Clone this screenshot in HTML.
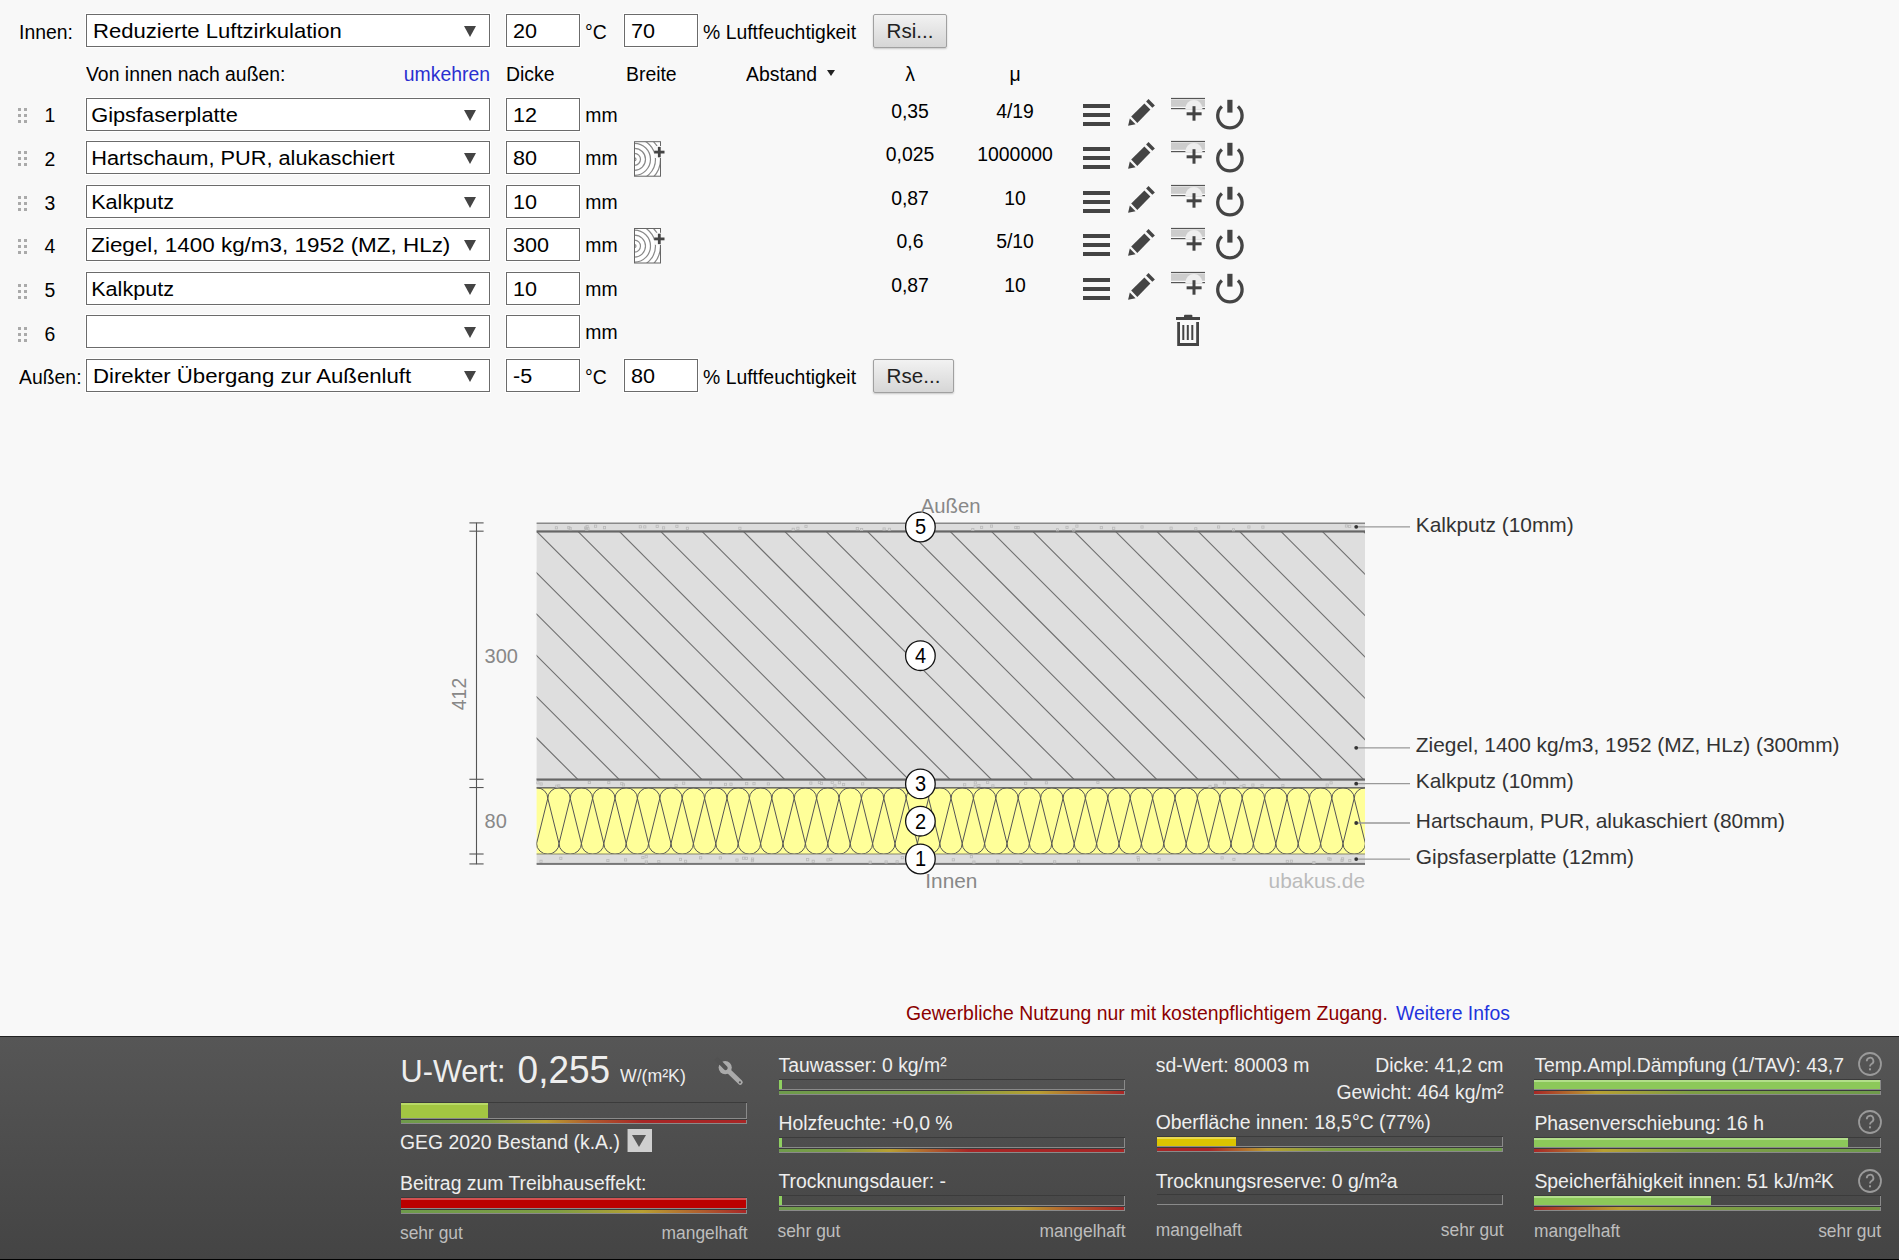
<!DOCTYPE html>
<html><head><meta charset="utf-8"><title>ubakus</title>
<style>
html,body{margin:0;padding:0;}
body{width:1899px;height:1260px;overflow:hidden;position:relative;background:#f8f8f8;font-family:"Liberation Sans", sans-serif;color:#000;}
.a{position:absolute;white-space:nowrap;}
.t{position:absolute;white-space:nowrap;font-size:19.4px;line-height:20px;}
.sel{position:absolute;box-sizing:border-box;background:#fff;border:1px solid #6b6b6b;box-shadow:0 0 0 1px #fff;}
.sel .tx{position:absolute;left:6px;top:5px;font-size:21.6px;line-height:22px;white-space:nowrap;transform:scaleY(0.92);transform-origin:0 100%;}
.sel .ar{position:absolute;right:13px;top:11px;width:0;height:0;border-left:6px solid transparent;border-right:6px solid transparent;border-top:11px solid #444;}
.inp{position:absolute;box-sizing:border-box;background:#fff;border:1px solid #6b6b6b;box-shadow:0 0 0 1px #fff;}
.inp .tx{position:absolute;left:6px;top:5px;font-size:21.6px;line-height:22px;white-space:nowrap;transform:scaleY(0.92);transform-origin:0 100%;}
.btn{position:absolute;box-sizing:border-box;border:1px solid #a0a0a0;border-radius:2px;background:linear-gradient(#f2f2f2,#d6d6d6);box-shadow:0 1px 2px rgba(0,0,0,0.2);font-size:20.6px;text-align:center;color:#222;}
</style></head><body>

<div class="a" style="left:19px;top:22.78px;font-size:19.4px;line-height:19.4px;color:#000;transform:scaleY(1.07);transform-origin:0 16.42px;">Innen:</div>
<div class="sel" style="left:86px;top:14px;width:404px;height:33px;"><div class="tx" style="left:6px;font-size:22.05px;">Reduzierte Luftzirkulation</div><div class="ar"></div></div>
<div class="inp" style="left:506px;top:14px;width:74px;height:33px;"><div class="tx">20</div></div>
<div class="a" style="left:585px;top:22.78px;font-size:19.4px;line-height:19.4px;color:#000;transform:scaleY(1.07);transform-origin:0 16.42px;">°C</div>
<div class="inp" style="left:624px;top:14px;width:74px;height:33px;"><div class="tx">70</div></div>
<div class="a" style="left:703px;top:22.78px;font-size:19.4px;line-height:19.4px;color:#000;transform:scaleY(1.07);transform-origin:0 16.42px;">% Luftfeuchtigkeit</div>
<div class="btn" style="left:873px;top:14px;width:74px;height:34px;line-height:32px;">Rsi...</div>
<div class="a" style="left:86px;top:64.58px;font-size:19.4px;line-height:19.4px;color:#000;transform:scaleY(1.07);transform-origin:0 16.42px;">Von innen nach außen:</div>
<div class="a" style="right:1409px;text-align:right;top:64.58px;font-size:19.4px;line-height:19.4px;color:#2a2fd0;transform:scaleY(1.07);transform-origin:0 16.42px;">umkehren</div>
<div class="a" style="left:506px;top:64.58px;font-size:19.4px;line-height:19.4px;color:#000;transform:scaleY(1.07);transform-origin:0 16.42px;">Dicke</div>
<div class="a" style="left:626px;top:64.58px;font-size:19.4px;line-height:19.4px;color:#000;transform:scaleY(1.07);transform-origin:0 16.42px;">Breite</div>
<div class="a" style="left:746px;top:64.58px;font-size:19.4px;line-height:19.4px;color:#000;transform:scaleY(1.07);transform-origin:0 16.42px;">Abstand</div>
<div class="a" style="left:827px;top:70px;width:0;height:0;border-left:4px solid transparent;border-right:4px solid transparent;border-top:6px solid #222;"></div>
<div class="a" style="left:810px;width:200px;text-align:center;top:64.58px;font-size:19.4px;line-height:19.4px;color:#000;transform:scaleY(1.07);transform-origin:0 16.42px;">λ</div>
<div class="a" style="left:915px;width:200px;text-align:center;top:64.58px;font-size:19.4px;line-height:19.4px;color:#000;transform:scaleY(1.07);transform-origin:0 16.42px;">μ</div>
<div class="a" style="left:18px;top:108.00px;width:3px;height:3px;background:#aaa;"></div>
<div class="a" style="left:18px;top:114.00px;width:3px;height:3px;background:#aaa;"></div>
<div class="a" style="left:18px;top:120.00px;width:3px;height:3px;background:#aaa;"></div>
<div class="a" style="left:24px;top:108.00px;width:3px;height:3px;background:#aaa;"></div>
<div class="a" style="left:24px;top:114.00px;width:3px;height:3px;background:#aaa;"></div>
<div class="a" style="left:24px;top:120.00px;width:3px;height:3px;background:#aaa;"></div>
<div class="a" style="left:-50px;width:200px;text-align:center;top:106.38px;font-size:19.4px;line-height:19.4px;color:#000;transform:scaleY(1.07);transform-origin:0 16.42px;">1</div>
<div class="sel" style="left:86px;top:98px;width:404px;height:33px;"><div class="tx" style="left:4.2px;font-size:21.8px;">Gipsfaserplatte</div><div class="ar"></div></div>
<div class="inp" style="left:506px;top:98px;width:74px;height:33px;"><div class="tx">12</div></div>
<div class="a" style="left:585.3px;top:106.08px;font-size:19.4px;line-height:19.4px;color:#000;transform:scaleY(1.07);transform-origin:0 16.42px;">mm</div>
<div class="a" style="left:810px;width:200px;text-align:center;top:101.78px;font-size:19.4px;line-height:19.4px;color:#000;transform:scaleY(1.07);transform-origin:0 16.42px;">0,35</div>
<div class="a" style="left:915px;width:200px;text-align:center;top:101.78px;font-size:19.4px;line-height:19.4px;color:#000;transform:scaleY(1.07);transform-origin:0 16.42px;">4/19</div>
<div class="a" style="left:18px;top:151.45px;width:3px;height:3px;background:#aaa;"></div>
<div class="a" style="left:18px;top:157.45px;width:3px;height:3px;background:#aaa;"></div>
<div class="a" style="left:18px;top:163.45px;width:3px;height:3px;background:#aaa;"></div>
<div class="a" style="left:24px;top:151.45px;width:3px;height:3px;background:#aaa;"></div>
<div class="a" style="left:24px;top:157.45px;width:3px;height:3px;background:#aaa;"></div>
<div class="a" style="left:24px;top:163.45px;width:3px;height:3px;background:#aaa;"></div>
<div class="a" style="left:-50px;width:200px;text-align:center;top:149.63px;font-size:19.4px;line-height:19.4px;color:#000;transform:scaleY(1.07);transform-origin:0 16.42px;">2</div>
<div class="sel" style="left:86px;top:141px;width:404px;height:33px;"><div class="tx" style="left:4.2px;font-size:21.75px;">Hartschaum, PUR, alukaschiert</div><div class="ar"></div></div>
<div class="inp" style="left:506px;top:141px;width:74px;height:33px;"><div class="tx">80</div></div>
<div class="a" style="left:585.3px;top:149.08px;font-size:19.4px;line-height:19.4px;color:#000;transform:scaleY(1.07);transform-origin:0 16.42px;">mm</div>
<div class="a" style="left:810px;width:200px;text-align:center;top:144.78px;font-size:19.4px;line-height:19.4px;color:#000;transform:scaleY(1.07);transform-origin:0 16.42px;">0,025</div>
<div class="a" style="left:915px;width:200px;text-align:center;top:144.78px;font-size:19.4px;line-height:19.4px;color:#000;transform:scaleY(1.07);transform-origin:0 16.42px;">1000000</div>
<div class="a" style="left:18px;top:195.90px;width:3px;height:3px;background:#aaa;"></div>
<div class="a" style="left:18px;top:201.90px;width:3px;height:3px;background:#aaa;"></div>
<div class="a" style="left:18px;top:207.90px;width:3px;height:3px;background:#aaa;"></div>
<div class="a" style="left:24px;top:195.90px;width:3px;height:3px;background:#aaa;"></div>
<div class="a" style="left:24px;top:201.90px;width:3px;height:3px;background:#aaa;"></div>
<div class="a" style="left:24px;top:207.90px;width:3px;height:3px;background:#aaa;"></div>
<div class="a" style="left:-50px;width:200px;text-align:center;top:193.88px;font-size:19.4px;line-height:19.4px;color:#000;transform:scaleY(1.07);transform-origin:0 16.42px;">3</div>
<div class="sel" style="left:86px;top:185px;width:404px;height:33px;"><div class="tx" style="left:4.2px;font-size:21.6px;">Kalkputz</div><div class="ar"></div></div>
<div class="inp" style="left:506px;top:185px;width:74px;height:33px;"><div class="tx">10</div></div>
<div class="a" style="left:585.3px;top:193.08px;font-size:19.4px;line-height:19.4px;color:#000;transform:scaleY(1.07);transform-origin:0 16.42px;">mm</div>
<div class="a" style="left:810px;width:200px;text-align:center;top:188.78px;font-size:19.4px;line-height:19.4px;color:#000;transform:scaleY(1.07);transform-origin:0 16.42px;">0,87</div>
<div class="a" style="left:915px;width:200px;text-align:center;top:188.78px;font-size:19.4px;line-height:19.4px;color:#000;transform:scaleY(1.07);transform-origin:0 16.42px;">10</div>
<div class="a" style="left:18px;top:239.35px;width:3px;height:3px;background:#aaa;"></div>
<div class="a" style="left:18px;top:245.35px;width:3px;height:3px;background:#aaa;"></div>
<div class="a" style="left:18px;top:251.35px;width:3px;height:3px;background:#aaa;"></div>
<div class="a" style="left:24px;top:239.35px;width:3px;height:3px;background:#aaa;"></div>
<div class="a" style="left:24px;top:245.35px;width:3px;height:3px;background:#aaa;"></div>
<div class="a" style="left:24px;top:251.35px;width:3px;height:3px;background:#aaa;"></div>
<div class="a" style="left:-50px;width:200px;text-align:center;top:237.13px;font-size:19.4px;line-height:19.4px;color:#000;transform:scaleY(1.07);transform-origin:0 16.42px;">4</div>
<div class="sel" style="left:86px;top:228px;width:404px;height:33px;"><div class="tx" style="left:4.2px;font-size:22.45px;">Ziegel, 1400 kg/m3, 1952 (MZ, HLz)</div><div class="ar"></div></div>
<div class="inp" style="left:506px;top:228px;width:74px;height:33px;"><div class="tx">300</div></div>
<div class="a" style="left:585.3px;top:236.08px;font-size:19.4px;line-height:19.4px;color:#000;transform:scaleY(1.07);transform-origin:0 16.42px;">mm</div>
<div class="a" style="left:810px;width:200px;text-align:center;top:231.78px;font-size:19.4px;line-height:19.4px;color:#000;transform:scaleY(1.07);transform-origin:0 16.42px;">0,6</div>
<div class="a" style="left:915px;width:200px;text-align:center;top:231.78px;font-size:19.4px;line-height:19.4px;color:#000;transform:scaleY(1.07);transform-origin:0 16.42px;">5/10</div>
<div class="a" style="left:18px;top:283.80px;width:3px;height:3px;background:#aaa;"></div>
<div class="a" style="left:18px;top:289.80px;width:3px;height:3px;background:#aaa;"></div>
<div class="a" style="left:18px;top:295.80px;width:3px;height:3px;background:#aaa;"></div>
<div class="a" style="left:24px;top:283.80px;width:3px;height:3px;background:#aaa;"></div>
<div class="a" style="left:24px;top:289.80px;width:3px;height:3px;background:#aaa;"></div>
<div class="a" style="left:24px;top:295.80px;width:3px;height:3px;background:#aaa;"></div>
<div class="a" style="left:-50px;width:200px;text-align:center;top:281.38px;font-size:19.4px;line-height:19.4px;color:#000;transform:scaleY(1.07);transform-origin:0 16.42px;">5</div>
<div class="sel" style="left:86px;top:272px;width:404px;height:33px;"><div class="tx" style="left:4.2px;font-size:21.6px;">Kalkputz</div><div class="ar"></div></div>
<div class="inp" style="left:506px;top:272px;width:74px;height:33px;"><div class="tx">10</div></div>
<div class="a" style="left:585.3px;top:280.08px;font-size:19.4px;line-height:19.4px;color:#000;transform:scaleY(1.07);transform-origin:0 16.42px;">mm</div>
<div class="a" style="left:810px;width:200px;text-align:center;top:275.78px;font-size:19.4px;line-height:19.4px;color:#000;transform:scaleY(1.07);transform-origin:0 16.42px;">0,87</div>
<div class="a" style="left:915px;width:200px;text-align:center;top:275.78px;font-size:19.4px;line-height:19.4px;color:#000;transform:scaleY(1.07);transform-origin:0 16.42px;">10</div>
<div class="a" style="left:18px;top:327.25px;width:3px;height:3px;background:#aaa;"></div>
<div class="a" style="left:18px;top:333.25px;width:3px;height:3px;background:#aaa;"></div>
<div class="a" style="left:18px;top:339.25px;width:3px;height:3px;background:#aaa;"></div>
<div class="a" style="left:24px;top:327.25px;width:3px;height:3px;background:#aaa;"></div>
<div class="a" style="left:24px;top:333.25px;width:3px;height:3px;background:#aaa;"></div>
<div class="a" style="left:24px;top:339.25px;width:3px;height:3px;background:#aaa;"></div>
<div class="a" style="left:-50px;width:200px;text-align:center;top:324.63px;font-size:19.4px;line-height:19.4px;color:#000;transform:scaleY(1.07);transform-origin:0 16.42px;">6</div>
<div class="sel" style="left:86px;top:315px;width:404px;height:33px;"><div class="tx" style="left:4.2px;font-size:22px;"></div><div class="ar"></div></div>
<div class="inp" style="left:506px;top:315px;width:74px;height:33px;"><div class="tx"></div></div>
<div class="a" style="left:585.3px;top:323.08px;font-size:19.4px;line-height:19.4px;color:#000;transform:scaleY(1.07);transform-origin:0 16.42px;">mm</div>
<div class="a" style="left:19px;top:367.58px;font-size:19.4px;line-height:19.4px;color:#000;transform:scaleY(1.07);transform-origin:0 16.42px;">Außen:</div>
<div class="sel" style="left:86px;top:359px;width:404px;height:33px;"><div class="tx" style="left:6px;font-size:22.2px;">Direkter Übergang zur Außenluft</div><div class="ar"></div></div>
<div class="inp" style="left:506px;top:359px;width:74px;height:33px;"><div class="tx">-5</div></div>
<div class="a" style="left:585px;top:367.58px;font-size:19.4px;line-height:19.4px;color:#000;transform:scaleY(1.07);transform-origin:0 16.42px;">°C</div>
<div class="inp" style="left:624px;top:359px;width:74px;height:33px;"><div class="tx">80</div></div>
<div class="a" style="left:703px;top:367.58px;font-size:19.4px;line-height:19.4px;color:#000;transform:scaleY(1.07);transform-origin:0 16.42px;">% Luftfeuchtigkeit</div>
<div class="btn" style="left:873px;top:359px;width:81px;height:34px;line-height:32px;">Rse...</div>
<svg class="a" style="left:0;top:0" width="1899" height="1036" viewBox="0 0 1899 1036"><defs><clipPath id="texclip"><rect x="634.5" y="141.7" width="26" height="34.5"/></clipPath><clipPath id="texclip2"><rect x="634.5" y="228.5" width="26" height="34.5"/></clipPath></defs><rect x="1083" y="104" width="27" height="4" fill="#444"/><rect x="1083" y="113" width="27" height="4" fill="#444"/><rect x="1083" y="122" width="27" height="4" fill="#444"/><polygon points="1131.2,116.6 1144.4,103.5 1150.4,109.5 1137.3,123.0" fill="#444"/><polygon points="1146.1,101.6 1148.5,99.0 1154.9,105.4 1152.3,107.8" fill="#444"/><polygon points="1128.1,125.8 1129.8,118.6 1135.6,124.3" fill="#444"/><rect x="1171" y="99.8" width="34" height="7" fill="#cccccc"/><rect x="1171" y="97.9" width="34" height="1.2" fill="#555"/><rect x="1171" y="108" width="34" height="1.2" fill="#555"/><path d="M1185.4,108.6 A8.5,8.5 0 0 1 1202.4,108.6 L1202.4,109.6 L1185.4,109.6 Z" fill="#eeeeee"/><rect x="1192.5" y="106.2" width="3" height="14.5" fill="#444"/><rect x="1186.6" y="112.3" width="15" height="3" fill="#444"/><path d="M1221.90,106.49 A12.2,12.2 0 1 0 1237.90,106.49" fill="none" stroke="#444" stroke-width="3.3"/><rect x="1227.3" y="99.8" width="5.2" height="12.8" fill="#444"/><rect x="1083" y="147" width="27" height="4" fill="#444"/><rect x="1083" y="156" width="27" height="4" fill="#444"/><rect x="1083" y="165" width="27" height="4" fill="#444"/><polygon points="1131.2,159.6 1144.4,146.5 1150.4,152.5 1137.3,166.0" fill="#444"/><polygon points="1146.1,144.6 1148.5,142.0 1154.9,148.4 1152.3,150.8" fill="#444"/><polygon points="1128.1,168.8 1129.8,161.6 1135.6,167.3" fill="#444"/><rect x="1171" y="142.8" width="34" height="7" fill="#cccccc"/><rect x="1171" y="140.9" width="34" height="1.2" fill="#555"/><rect x="1171" y="151" width="34" height="1.2" fill="#555"/><path d="M1185.4,151.6 A8.5,8.5 0 0 1 1202.4,151.6 L1202.4,152.6 L1185.4,152.6 Z" fill="#eeeeee"/><rect x="1192.5" y="149.2" width="3" height="14.5" fill="#444"/><rect x="1186.6" y="155.3" width="15" height="3" fill="#444"/><path d="M1221.90,149.49 A12.2,12.2 0 1 0 1237.90,149.49" fill="none" stroke="#444" stroke-width="3.3"/><rect x="1227.3" y="142.8" width="5.2" height="12.8" fill="#444"/><rect x="1083" y="191" width="27" height="4" fill="#444"/><rect x="1083" y="200" width="27" height="4" fill="#444"/><rect x="1083" y="209" width="27" height="4" fill="#444"/><polygon points="1131.2,203.6 1144.4,190.5 1150.4,196.5 1137.3,210.0" fill="#444"/><polygon points="1146.1,188.6 1148.5,186.0 1154.9,192.4 1152.3,194.8" fill="#444"/><polygon points="1128.1,212.8 1129.8,205.6 1135.6,211.3" fill="#444"/><rect x="1171" y="186.8" width="34" height="7" fill="#cccccc"/><rect x="1171" y="184.9" width="34" height="1.2" fill="#555"/><rect x="1171" y="195" width="34" height="1.2" fill="#555"/><path d="M1185.4,195.6 A8.5,8.5 0 0 1 1202.4,195.6 L1202.4,196.6 L1185.4,196.6 Z" fill="#eeeeee"/><rect x="1192.5" y="193.2" width="3" height="14.5" fill="#444"/><rect x="1186.6" y="199.3" width="15" height="3" fill="#444"/><path d="M1221.90,193.49 A12.2,12.2 0 1 0 1237.90,193.49" fill="none" stroke="#444" stroke-width="3.3"/><rect x="1227.3" y="186.8" width="5.2" height="12.8" fill="#444"/><rect x="1083" y="234" width="27" height="4" fill="#444"/><rect x="1083" y="243" width="27" height="4" fill="#444"/><rect x="1083" y="252" width="27" height="4" fill="#444"/><polygon points="1131.2,246.6 1144.4,233.5 1150.4,239.5 1137.3,253.0" fill="#444"/><polygon points="1146.1,231.6 1148.5,229.0 1154.9,235.4 1152.3,237.8" fill="#444"/><polygon points="1128.1,255.8 1129.8,248.6 1135.6,254.3" fill="#444"/><rect x="1171" y="229.8" width="34" height="7" fill="#cccccc"/><rect x="1171" y="227.9" width="34" height="1.2" fill="#555"/><rect x="1171" y="238" width="34" height="1.2" fill="#555"/><path d="M1185.4,238.6 A8.5,8.5 0 0 1 1202.4,238.6 L1202.4,239.6 L1185.4,239.6 Z" fill="#eeeeee"/><rect x="1192.5" y="236.2" width="3" height="14.5" fill="#444"/><rect x="1186.6" y="242.3" width="15" height="3" fill="#444"/><path d="M1221.90,236.49 A12.2,12.2 0 1 0 1237.90,236.49" fill="none" stroke="#444" stroke-width="3.3"/><rect x="1227.3" y="229.8" width="5.2" height="12.8" fill="#444"/><rect x="1083" y="278" width="27" height="4" fill="#444"/><rect x="1083" y="287" width="27" height="4" fill="#444"/><rect x="1083" y="296" width="27" height="4" fill="#444"/><polygon points="1131.2,290.6 1144.4,277.5 1150.4,283.5 1137.3,297.0" fill="#444"/><polygon points="1146.1,275.6 1148.5,273.0 1154.9,279.4 1152.3,281.8" fill="#444"/><polygon points="1128.1,299.8 1129.8,292.6 1135.6,298.3" fill="#444"/><rect x="1171" y="273.8" width="34" height="7" fill="#cccccc"/><rect x="1171" y="271.9" width="34" height="1.2" fill="#555"/><rect x="1171" y="282" width="34" height="1.2" fill="#555"/><path d="M1185.4,282.6 A8.5,8.5 0 0 1 1202.4,282.6 L1202.4,283.6 L1185.4,283.6 Z" fill="#eeeeee"/><rect x="1192.5" y="280.2" width="3" height="14.5" fill="#444"/><rect x="1186.6" y="286.3" width="15" height="3" fill="#444"/><path d="M1221.90,280.49 A12.2,12.2 0 1 0 1237.90,280.49" fill="none" stroke="#444" stroke-width="3.3"/><rect x="1227.3" y="273.8" width="5.2" height="12.8" fill="#444"/><rect x="634.5" y="141.7" width="26" height="34.5" fill="#fff"/><g clip-path="url(#texclip)"><circle cx="634.5" cy="159.3" r="1.5" fill="none" stroke="#8a8a8a" stroke-width="1.2"/><circle cx="634.5" cy="159.3" r="6" fill="none" stroke="#8a8a8a" stroke-width="1.2"/><circle cx="634.5" cy="159.3" r="11" fill="none" stroke="#8a8a8a" stroke-width="1.2"/><circle cx="634.5" cy="159.3" r="16" fill="none" stroke="#8a8a8a" stroke-width="1.2"/><circle cx="634.5" cy="159.3" r="21" fill="none" stroke="#8a8a8a" stroke-width="1.2"/><circle cx="634.5" cy="159.3" r="26" fill="none" stroke="#8a8a8a" stroke-width="1.2"/></g><rect x="634.5" y="141.7" width="26" height="34.5" fill="none" stroke="#666" stroke-width="1"/><rect x="654" y="146.0" width="13" height="12" fill="#f8f8f8"/><rect x="657.9" y="146.9" width="2.8" height="10.4" fill="#444"/><rect x="654.1" y="150.7" width="10.4" height="2.8" fill="#444"/><rect x="634.5" y="228.49999999999997" width="26" height="34.5" fill="#fff"/><g clip-path="url(#texclip2)"><circle cx="634.5" cy="246.1" r="1.5" fill="none" stroke="#8a8a8a" stroke-width="1.2"/><circle cx="634.5" cy="246.1" r="6" fill="none" stroke="#8a8a8a" stroke-width="1.2"/><circle cx="634.5" cy="246.1" r="11" fill="none" stroke="#8a8a8a" stroke-width="1.2"/><circle cx="634.5" cy="246.1" r="16" fill="none" stroke="#8a8a8a" stroke-width="1.2"/><circle cx="634.5" cy="246.1" r="21" fill="none" stroke="#8a8a8a" stroke-width="1.2"/><circle cx="634.5" cy="246.1" r="26" fill="none" stroke="#8a8a8a" stroke-width="1.2"/></g><rect x="634.5" y="228.49999999999997" width="26" height="34.5" fill="none" stroke="#666" stroke-width="1"/><rect x="654" y="232.79999999999998" width="13" height="12" fill="#f8f8f8"/><rect x="657.9" y="233.7" width="2.8" height="10.4" fill="#444"/><rect x="654.1" y="237.49999999999997" width="10.4" height="2.8" fill="#444"/><rect x="1176" y="317" width="24" height="3" fill="#444"/><rect x="1184" y="314.8" width="8.4" height="3" rx="1" fill="#444"/><path d="M1178.6,322 L1178.6,344.5 L1197.6,344.5 L1197.6,322" fill="none" stroke="#444" stroke-width="2.8"/><rect x="1182.3" y="325" width="2" height="15" fill="#444"/><rect x="1186.8" y="325" width="2" height="15" fill="#444"/><rect x="1191.3" y="325" width="2" height="15" fill="#444"/><rect x="536.6" y="523.2" width="828.4" height="8.269999999999982" fill="#dcdcdc"/><rect x="536.6" y="531.47" width="828.4" height="248.10000000000002" fill="#dedede"/><rect x="536.6" y="779.57" width="828.4" height="8.269999999999982" fill="#dcdcdc"/><rect x="536.6" y="787.84" width="828.4" height="66.15999999999997" fill="#ffff99"/><rect x="536.6" y="854.0" width="828.4" height="9.923999999999978" fill="#dcdcdc"/><clipPath id="zc"><rect x="536.6" y="531.47" width="828.4" height="248.10000000000002"/></clipPath><g clip-path="url(#zc)" stroke="#6e6e6e" stroke-width="1.1"><line x1="205.80" y1="531.47" x2="505.80" y2="831.47"/><line x1="247.15" y1="531.47" x2="547.15" y2="831.47"/><line x1="288.50" y1="531.47" x2="588.50" y2="831.47"/><line x1="329.85" y1="531.47" x2="629.85" y2="831.47"/><line x1="371.20" y1="531.47" x2="671.20" y2="831.47"/><line x1="412.55" y1="531.47" x2="712.55" y2="831.47"/><line x1="453.90" y1="531.47" x2="753.90" y2="831.47"/><line x1="495.25" y1="531.47" x2="795.25" y2="831.47"/><line x1="536.60" y1="531.47" x2="836.60" y2="831.47"/><line x1="577.95" y1="531.47" x2="877.95" y2="831.47"/><line x1="619.30" y1="531.47" x2="919.30" y2="831.47"/><line x1="660.65" y1="531.47" x2="960.65" y2="831.47"/><line x1="702.00" y1="531.47" x2="1002.00" y2="831.47"/><line x1="743.35" y1="531.47" x2="1043.35" y2="831.47"/><line x1="784.70" y1="531.47" x2="1084.70" y2="831.47"/><line x1="826.05" y1="531.47" x2="1126.05" y2="831.47"/><line x1="867.40" y1="531.47" x2="1167.40" y2="831.47"/><line x1="908.75" y1="531.47" x2="1208.75" y2="831.47"/><line x1="950.10" y1="531.47" x2="1250.10" y2="831.47"/><line x1="991.45" y1="531.47" x2="1291.45" y2="831.47"/><line x1="1032.80" y1="531.47" x2="1332.80" y2="831.47"/><line x1="1074.15" y1="531.47" x2="1374.15" y2="831.47"/><line x1="1115.50" y1="531.47" x2="1415.50" y2="831.47"/><line x1="1156.85" y1="531.47" x2="1456.85" y2="831.47"/><line x1="1198.20" y1="531.47" x2="1498.20" y2="831.47"/><line x1="1239.55" y1="531.47" x2="1539.55" y2="831.47"/><line x1="1280.90" y1="531.47" x2="1580.90" y2="831.47"/><line x1="1322.25" y1="531.47" x2="1622.25" y2="831.47"/><line x1="1363.60" y1="531.47" x2="1663.60" y2="831.47"/><line x1="1404.95" y1="531.47" x2="1704.95" y2="831.47"/></g><clipPath id="ic"><rect x="536.6" y="787.84" width="828.4" height="66.15999999999997"/></clipPath><g clip-path="url(#ic)" stroke="#555" stroke-width="1.0" fill="none"><path d="M503.00,798.4 A11.20,10.64 0 0 1 525.40,798.4 M514.20,843.5 A11.20,10.64 0 0 0 536.60,843.5 M525.40,798.4 L536.60,843.5 M525.40,798.4 L514.20,843.5 M525.40,798.4 A11.20,10.64 0 0 1 547.80,798.4 M536.60,843.5 A11.20,10.64 0 0 0 559.00,843.5 M547.80,798.4 L559.00,843.5 M547.80,798.4 L536.60,843.5 M547.80,798.4 A11.20,10.64 0 0 1 570.20,798.4 M559.00,843.5 A11.20,10.64 0 0 0 581.40,843.5 M570.20,798.4 L581.40,843.5 M570.20,798.4 L559.00,843.5 M570.20,798.4 A11.20,10.64 0 0 1 592.60,798.4 M581.40,843.5 A11.20,10.64 0 0 0 603.80,843.5 M592.60,798.4 L603.80,843.5 M592.60,798.4 L581.40,843.5 M592.60,798.4 A11.20,10.64 0 0 1 615.00,798.4 M603.80,843.5 A11.20,10.64 0 0 0 626.20,843.5 M615.00,798.4 L626.20,843.5 M615.00,798.4 L603.80,843.5 M615.00,798.4 A11.20,10.64 0 0 1 637.40,798.4 M626.20,843.5 A11.20,10.64 0 0 0 648.60,843.5 M637.40,798.4 L648.60,843.5 M637.40,798.4 L626.20,843.5 M637.40,798.4 A11.20,10.64 0 0 1 659.80,798.4 M648.60,843.5 A11.20,10.64 0 0 0 671.00,843.5 M659.80,798.4 L671.00,843.5 M659.80,798.4 L648.60,843.5 M659.80,798.4 A11.20,10.64 0 0 1 682.20,798.4 M671.00,843.5 A11.20,10.64 0 0 0 693.40,843.5 M682.20,798.4 L693.40,843.5 M682.20,798.4 L671.00,843.5 M682.20,798.4 A11.20,10.64 0 0 1 704.60,798.4 M693.40,843.5 A11.20,10.64 0 0 0 715.80,843.5 M704.60,798.4 L715.80,843.5 M704.60,798.4 L693.40,843.5 M704.60,798.4 A11.20,10.64 0 0 1 727.00,798.4 M715.80,843.5 A11.20,10.64 0 0 0 738.20,843.5 M727.00,798.4 L738.20,843.5 M727.00,798.4 L715.80,843.5 M727.00,798.4 A11.20,10.64 0 0 1 749.40,798.4 M738.20,843.5 A11.20,10.64 0 0 0 760.60,843.5 M749.40,798.4 L760.60,843.5 M749.40,798.4 L738.20,843.5 M749.40,798.4 A11.20,10.64 0 0 1 771.80,798.4 M760.60,843.5 A11.20,10.64 0 0 0 783.00,843.5 M771.80,798.4 L783.00,843.5 M771.80,798.4 L760.60,843.5 M771.80,798.4 A11.20,10.64 0 0 1 794.20,798.4 M783.00,843.5 A11.20,10.64 0 0 0 805.40,843.5 M794.20,798.4 L805.40,843.5 M794.20,798.4 L783.00,843.5 M794.20,798.4 A11.20,10.64 0 0 1 816.60,798.4 M805.40,843.5 A11.20,10.64 0 0 0 827.80,843.5 M816.60,798.4 L827.80,843.5 M816.60,798.4 L805.40,843.5 M816.60,798.4 A11.20,10.64 0 0 1 839.00,798.4 M827.80,843.5 A11.20,10.64 0 0 0 850.20,843.5 M839.00,798.4 L850.20,843.5 M839.00,798.4 L827.80,843.5 M839.00,798.4 A11.20,10.64 0 0 1 861.40,798.4 M850.20,843.5 A11.20,10.64 0 0 0 872.60,843.5 M861.40,798.4 L872.60,843.5 M861.40,798.4 L850.20,843.5 M861.40,798.4 A11.20,10.64 0 0 1 883.80,798.4 M872.60,843.5 A11.20,10.64 0 0 0 895.00,843.5 M883.80,798.4 L895.00,843.5 M883.80,798.4 L872.60,843.5 M883.80,798.4 A11.20,10.64 0 0 1 906.20,798.4 M895.00,843.5 A11.20,10.64 0 0 0 917.40,843.5 M906.20,798.4 L917.40,843.5 M906.20,798.4 L895.00,843.5 M906.20,798.4 A11.20,10.64 0 0 1 928.60,798.4 M917.40,843.5 A11.20,10.64 0 0 0 939.80,843.5 M928.60,798.4 L939.80,843.5 M928.60,798.4 L917.40,843.5 M928.60,798.4 A11.20,10.64 0 0 1 951.00,798.4 M939.80,843.5 A11.20,10.64 0 0 0 962.20,843.5 M951.00,798.4 L962.20,843.5 M951.00,798.4 L939.80,843.5 M951.00,798.4 A11.20,10.64 0 0 1 973.40,798.4 M962.20,843.5 A11.20,10.64 0 0 0 984.60,843.5 M973.40,798.4 L984.60,843.5 M973.40,798.4 L962.20,843.5 M973.40,798.4 A11.20,10.64 0 0 1 995.80,798.4 M984.60,843.5 A11.20,10.64 0 0 0 1007.00,843.5 M995.80,798.4 L1007.00,843.5 M995.80,798.4 L984.60,843.5 M995.80,798.4 A11.20,10.64 0 0 1 1018.20,798.4 M1007.00,843.5 A11.20,10.64 0 0 0 1029.40,843.5 M1018.20,798.4 L1029.40,843.5 M1018.20,798.4 L1007.00,843.5 M1018.20,798.4 A11.20,10.64 0 0 1 1040.60,798.4 M1029.40,843.5 A11.20,10.64 0 0 0 1051.80,843.5 M1040.60,798.4 L1051.80,843.5 M1040.60,798.4 L1029.40,843.5 M1040.60,798.4 A11.20,10.64 0 0 1 1063.00,798.4 M1051.80,843.5 A11.20,10.64 0 0 0 1074.20,843.5 M1063.00,798.4 L1074.20,843.5 M1063.00,798.4 L1051.80,843.5 M1063.00,798.4 A11.20,10.64 0 0 1 1085.40,798.4 M1074.20,843.5 A11.20,10.64 0 0 0 1096.60,843.5 M1085.40,798.4 L1096.60,843.5 M1085.40,798.4 L1074.20,843.5 M1085.40,798.4 A11.20,10.64 0 0 1 1107.80,798.4 M1096.60,843.5 A11.20,10.64 0 0 0 1119.00,843.5 M1107.80,798.4 L1119.00,843.5 M1107.80,798.4 L1096.60,843.5 M1107.80,798.4 A11.20,10.64 0 0 1 1130.20,798.4 M1119.00,843.5 A11.20,10.64 0 0 0 1141.40,843.5 M1130.20,798.4 L1141.40,843.5 M1130.20,798.4 L1119.00,843.5 M1130.20,798.4 A11.20,10.64 0 0 1 1152.60,798.4 M1141.40,843.5 A11.20,10.64 0 0 0 1163.80,843.5 M1152.60,798.4 L1163.80,843.5 M1152.60,798.4 L1141.40,843.5 M1152.60,798.4 A11.20,10.64 0 0 1 1175.00,798.4 M1163.80,843.5 A11.20,10.64 0 0 0 1186.20,843.5 M1175.00,798.4 L1186.20,843.5 M1175.00,798.4 L1163.80,843.5 M1175.00,798.4 A11.20,10.64 0 0 1 1197.40,798.4 M1186.20,843.5 A11.20,10.64 0 0 0 1208.60,843.5 M1197.40,798.4 L1208.60,843.5 M1197.40,798.4 L1186.20,843.5 M1197.40,798.4 A11.20,10.64 0 0 1 1219.80,798.4 M1208.60,843.5 A11.20,10.64 0 0 0 1231.00,843.5 M1219.80,798.4 L1231.00,843.5 M1219.80,798.4 L1208.60,843.5 M1219.80,798.4 A11.20,10.64 0 0 1 1242.20,798.4 M1231.00,843.5 A11.20,10.64 0 0 0 1253.40,843.5 M1242.20,798.4 L1253.40,843.5 M1242.20,798.4 L1231.00,843.5 M1242.20,798.4 A11.20,10.64 0 0 1 1264.60,798.4 M1253.40,843.5 A11.20,10.64 0 0 0 1275.80,843.5 M1264.60,798.4 L1275.80,843.5 M1264.60,798.4 L1253.40,843.5 M1264.60,798.4 A11.20,10.64 0 0 1 1287.00,798.4 M1275.80,843.5 A11.20,10.64 0 0 0 1298.20,843.5 M1287.00,798.4 L1298.20,843.5 M1287.00,798.4 L1275.80,843.5 M1287.00,798.4 A11.20,10.64 0 0 1 1309.40,798.4 M1298.20,843.5 A11.20,10.64 0 0 0 1320.60,843.5 M1309.40,798.4 L1320.60,843.5 M1309.40,798.4 L1298.20,843.5 M1309.40,798.4 A11.20,10.64 0 0 1 1331.80,798.4 M1320.60,843.5 A11.20,10.64 0 0 0 1343.00,843.5 M1331.80,798.4 L1343.00,843.5 M1331.80,798.4 L1320.60,843.5 M1331.80,798.4 A11.20,10.64 0 0 1 1354.20,798.4 M1343.00,843.5 A11.20,10.64 0 0 0 1365.40,843.5 M1354.20,798.4 L1365.40,843.5 M1354.20,798.4 L1343.00,843.5 M1354.20,798.4 A11.20,10.64 0 0 1 1376.60,798.4 M1365.40,843.5 A11.20,10.64 0 0 0 1387.80,843.5 M1376.60,798.4 L1387.80,843.5 M1376.60,798.4 L1365.40,843.5 M1376.60,798.4 A11.20,10.64 0 0 1 1399.00,798.4 M1387.80,843.5 A11.20,10.64 0 0 0 1410.20,843.5 M1399.00,798.4 L1410.20,843.5 M1399.00,798.4 L1387.80,843.5"/></g><rect x="536.6" y="522.55" width="828.4" height="1.3" fill="#7a7a7a"/><rect x="536.6" y="530.37" width="828.4" height="2.2" fill="#666"/><rect x="536.6" y="778.47" width="828.4" height="2.2" fill="#666"/><rect x="536.6" y="787.19" width="828.4" height="1.3" fill="#555"/><rect x="536.6" y="853.50" width="828.4" height="1.0" fill="#8a8a6a"/><rect x="536.6" y="862.92" width="828.4" height="2.0" fill="#777"/><rect x="804.9" y="525.3" width="2.2" height="2.2" fill="none" stroke="#bababa" stroke-width="0.8"/><rect x="1075.8" y="525.0" width="2.2" height="2.2" fill="none" stroke="#bababa" stroke-width="0.8"/><rect x="980.5" y="526.3" width="2.2" height="2.2" fill="none" stroke="#bababa" stroke-width="0.8"/><rect x="584.6" y="526.9" width="2.2" height="2.2" fill="none" stroke="#bababa" stroke-width="0.8"/><rect x="567.7" y="526.6" width="2.2" height="2.2" fill="none" stroke="#bababa" stroke-width="0.8"/><rect x="594.5" y="525.1" width="2.2" height="2.2" fill="none" stroke="#bababa" stroke-width="0.8"/><rect x="888.3" y="528.2" width="2.2" height="2.2" fill="none" stroke="#bababa" stroke-width="0.8"/><rect x="639.2" y="525.7" width="2.2" height="2.2" fill="none" stroke="#bababa" stroke-width="0.8"/><rect x="1056.4" y="528.7" width="2.2" height="2.2" fill="none" stroke="#bababa" stroke-width="0.8"/><rect x="1014.7" y="526.4" width="2.2" height="2.2" fill="none" stroke="#bababa" stroke-width="0.8"/><rect x="1345.3" y="524.9" width="2.2" height="2.2" fill="none" stroke="#bababa" stroke-width="0.8"/><rect x="1247.8" y="525.9" width="2.2" height="2.2" fill="none" stroke="#bababa" stroke-width="0.8"/><rect x="656.1" y="525.2" width="2.2" height="2.2" fill="none" stroke="#bababa" stroke-width="0.8"/><rect x="792.1" y="528.2" width="2.2" height="2.2" fill="none" stroke="#bababa" stroke-width="0.8"/><rect x="686.3" y="527.2" width="2.2" height="2.2" fill="none" stroke="#bababa" stroke-width="0.8"/><rect x="1065.9" y="526.3" width="2.2" height="2.2" fill="none" stroke="#bababa" stroke-width="0.8"/><rect x="990.4" y="525.0" width="2.2" height="2.2" fill="none" stroke="#bababa" stroke-width="0.8"/><rect x="586.0" y="525.6" width="2.2" height="2.2" fill="none" stroke="#bababa" stroke-width="0.8"/><rect x="1100.2" y="526.5" width="2.2" height="2.2" fill="none" stroke="#bababa" stroke-width="0.8"/><rect x="796.8" y="527.2" width="2.2" height="2.2" fill="none" stroke="#bababa" stroke-width="0.8"/><rect x="912.0" y="526.0" width="2.2" height="2.2" fill="none" stroke="#bababa" stroke-width="0.8"/><rect x="1194.7" y="527.7" width="2.2" height="2.2" fill="none" stroke="#bababa" stroke-width="0.8"/><rect x="738.8" y="527.2" width="2.2" height="2.2" fill="none" stroke="#bababa" stroke-width="0.8"/><rect x="971.7" y="528.4" width="2.2" height="2.2" fill="none" stroke="#bababa" stroke-width="0.8"/><rect x="1140.9" y="525.9" width="2.2" height="2.2" fill="none" stroke="#bababa" stroke-width="0.8"/><rect x="1348.6" y="525.2" width="2.2" height="2.2" fill="none" stroke="#bababa" stroke-width="0.8"/><rect x="883.0" y="527.9" width="2.2" height="2.2" fill="none" stroke="#bababa" stroke-width="0.8"/><rect x="662.5" y="526.8" width="2.2" height="2.2" fill="none" stroke="#bababa" stroke-width="0.8"/><rect x="569.1" y="527.6" width="2.2" height="2.2" fill="none" stroke="#bababa" stroke-width="0.8"/><rect x="1170.0" y="527.1" width="2.2" height="2.2" fill="none" stroke="#bababa" stroke-width="0.8"/><rect x="1261.8" y="526.0" width="2.2" height="2.2" fill="none" stroke="#bababa" stroke-width="0.8"/><rect x="1112.6" y="527.2" width="2.2" height="2.2" fill="none" stroke="#bababa" stroke-width="0.8"/><rect x="1017.0" y="526.6" width="2.2" height="2.2" fill="none" stroke="#bababa" stroke-width="0.8"/><rect x="1232.4" y="528.7" width="2.2" height="2.2" fill="none" stroke="#bababa" stroke-width="0.8"/><rect x="929.3" y="527.5" width="2.2" height="2.2" fill="none" stroke="#bababa" stroke-width="0.8"/><rect x="586.9" y="527.7" width="2.2" height="2.2" fill="none" stroke="#bababa" stroke-width="0.8"/><rect x="1072.7" y="528.9" width="2.2" height="2.2" fill="none" stroke="#bababa" stroke-width="0.8"/><rect x="1217.5" y="525.9" width="2.2" height="2.2" fill="none" stroke="#bababa" stroke-width="0.8"/><rect x="856.2" y="527.6" width="2.2" height="2.2" fill="none" stroke="#bababa" stroke-width="0.8"/><rect x="555.3" y="526.7" width="2.2" height="2.2" fill="none" stroke="#bababa" stroke-width="0.8"/><rect x="675.8" y="525.2" width="2.2" height="2.2" fill="none" stroke="#bababa" stroke-width="0.8"/><rect x="585.4" y="528.0" width="2.2" height="2.2" fill="none" stroke="#bababa" stroke-width="0.8"/><rect x="643.7" y="525.8" width="2.2" height="2.2" fill="none" stroke="#bababa" stroke-width="0.8"/><rect x="860.5" y="528.4" width="2.2" height="2.2" fill="none" stroke="#bababa" stroke-width="0.8"/><rect x="603.4" y="526.6" width="2.2" height="2.2" fill="none" stroke="#bababa" stroke-width="0.8"/><rect x="991.8" y="784.8" width="2.2" height="2.2" fill="none" stroke="#bababa" stroke-width="0.8"/><rect x="1215.3" y="784.8" width="2.2" height="2.2" fill="none" stroke="#bababa" stroke-width="0.8"/><rect x="767.2" y="782.8" width="2.2" height="2.2" fill="none" stroke="#bababa" stroke-width="0.8"/><rect x="833.8" y="784.8" width="2.2" height="2.2" fill="none" stroke="#bababa" stroke-width="0.8"/><rect x="1330.0" y="781.7" width="2.2" height="2.2" fill="none" stroke="#bababa" stroke-width="0.8"/><rect x="682.6" y="782.1" width="2.2" height="2.2" fill="none" stroke="#bababa" stroke-width="0.8"/><rect x="729.9" y="783.1" width="2.2" height="2.2" fill="none" stroke="#bababa" stroke-width="0.8"/><rect x="1024.6" y="782.2" width="2.2" height="2.2" fill="none" stroke="#bababa" stroke-width="0.8"/><rect x="540.0" y="782.9" width="2.2" height="2.2" fill="none" stroke="#bababa" stroke-width="0.8"/><rect x="842.5" y="783.5" width="2.2" height="2.2" fill="none" stroke="#bababa" stroke-width="0.8"/><rect x="1326.1" y="784.0" width="2.2" height="2.2" fill="none" stroke="#bababa" stroke-width="0.8"/><rect x="963.6" y="783.7" width="2.2" height="2.2" fill="none" stroke="#bababa" stroke-width="0.8"/><rect x="1096.8" y="781.3" width="2.2" height="2.2" fill="none" stroke="#bababa" stroke-width="0.8"/><rect x="1281.8" y="784.4" width="2.2" height="2.2" fill="none" stroke="#bababa" stroke-width="0.8"/><rect x="1261.0" y="784.5" width="2.2" height="2.2" fill="none" stroke="#bababa" stroke-width="0.8"/><rect x="861.6" y="782.8" width="2.2" height="2.2" fill="none" stroke="#bababa" stroke-width="0.8"/><rect x="622.4" y="783.8" width="2.2" height="2.2" fill="none" stroke="#bababa" stroke-width="0.8"/><rect x="588.2" y="781.4" width="2.2" height="2.2" fill="none" stroke="#bababa" stroke-width="0.8"/><rect x="709.5" y="781.8" width="2.2" height="2.2" fill="none" stroke="#bababa" stroke-width="0.8"/><rect x="818.3" y="781.3" width="2.2" height="2.2" fill="none" stroke="#bababa" stroke-width="0.8"/><rect x="536.8" y="781.7" width="2.2" height="2.2" fill="none" stroke="#bababa" stroke-width="0.8"/><rect x="620.7" y="782.6" width="2.2" height="2.2" fill="none" stroke="#bababa" stroke-width="0.8"/><rect x="557.7" y="784.8" width="2.2" height="2.2" fill="none" stroke="#bababa" stroke-width="0.8"/><rect x="1045.3" y="781.7" width="2.2" height="2.2" fill="none" stroke="#bababa" stroke-width="0.8"/><rect x="745.6" y="782.6" width="2.2" height="2.2" fill="none" stroke="#bababa" stroke-width="0.8"/><rect x="838.3" y="781.6" width="2.2" height="2.2" fill="none" stroke="#bababa" stroke-width="0.8"/><rect x="1239.9" y="785.3" width="2.2" height="2.2" fill="none" stroke="#bababa" stroke-width="0.8"/><rect x="922.6" y="783.1" width="2.2" height="2.2" fill="none" stroke="#bababa" stroke-width="0.8"/><rect x="607.7" y="781.5" width="2.2" height="2.2" fill="none" stroke="#bababa" stroke-width="0.8"/><rect x="820.4" y="782.2" width="2.2" height="2.2" fill="none" stroke="#bababa" stroke-width="0.8"/><rect x="1223.2" y="781.8" width="2.2" height="2.2" fill="none" stroke="#bababa" stroke-width="0.8"/><rect x="555.7" y="785.1" width="2.2" height="2.2" fill="none" stroke="#bababa" stroke-width="0.8"/><rect x="974.2" y="781.7" width="2.2" height="2.2" fill="none" stroke="#bababa" stroke-width="0.8"/><rect x="986.6" y="781.2" width="2.2" height="2.2" fill="none" stroke="#bababa" stroke-width="0.8"/><rect x="974.1" y="785.2" width="2.2" height="2.2" fill="none" stroke="#bababa" stroke-width="0.8"/><rect x="1251.8" y="784.0" width="2.2" height="2.2" fill="none" stroke="#bababa" stroke-width="0.8"/><rect x="752.9" y="782.6" width="2.2" height="2.2" fill="none" stroke="#bababa" stroke-width="0.8"/><rect x="675.0" y="784.4" width="2.2" height="2.2" fill="none" stroke="#bababa" stroke-width="0.8"/><rect x="977.8" y="784.4" width="2.2" height="2.2" fill="none" stroke="#bababa" stroke-width="0.8"/><rect x="809.7" y="782.0" width="2.2" height="2.2" fill="none" stroke="#bababa" stroke-width="0.8"/><rect x="1208.9" y="785.3" width="2.2" height="2.2" fill="none" stroke="#bababa" stroke-width="0.8"/><rect x="1242.9" y="784.5" width="2.2" height="2.2" fill="none" stroke="#bababa" stroke-width="0.8"/><rect x="1214.5" y="784.2" width="2.2" height="2.2" fill="none" stroke="#bababa" stroke-width="0.8"/><rect x="724.4" y="783.3" width="2.2" height="2.2" fill="none" stroke="#bababa" stroke-width="0.8"/><rect x="831.1" y="781.2" width="2.2" height="2.2" fill="none" stroke="#bababa" stroke-width="0.8"/><rect x="559.7" y="857.2" width="2.2" height="2.2" fill="none" stroke="#bababa" stroke-width="0.8"/><rect x="751.3" y="859.6" width="2.2" height="2.2" fill="none" stroke="#bababa" stroke-width="0.8"/><rect x="1329.0" y="858.1" width="2.2" height="2.2" fill="none" stroke="#bababa" stroke-width="0.8"/><rect x="1312.8" y="861.4" width="2.2" height="2.2" fill="none" stroke="#bababa" stroke-width="0.8"/><rect x="1327.7" y="857.7" width="2.2" height="2.2" fill="none" stroke="#bababa" stroke-width="0.8"/><rect x="719.2" y="856.8" width="2.2" height="2.2" fill="none" stroke="#bababa" stroke-width="0.8"/><rect x="699.6" y="856.7" width="2.2" height="2.2" fill="none" stroke="#bababa" stroke-width="0.8"/><rect x="1053.6" y="860.8" width="2.2" height="2.2" fill="none" stroke="#bababa" stroke-width="0.8"/><rect x="1232.8" y="858.3" width="2.2" height="2.2" fill="none" stroke="#bababa" stroke-width="0.8"/><rect x="1077.5" y="860.2" width="2.2" height="2.2" fill="none" stroke="#bababa" stroke-width="0.8"/><rect x="606.8" y="859.4" width="2.2" height="2.2" fill="none" stroke="#bababa" stroke-width="0.8"/><rect x="1290.3" y="860.1" width="2.2" height="2.2" fill="none" stroke="#bababa" stroke-width="0.8"/><rect x="1158.0" y="858.3" width="2.2" height="2.2" fill="none" stroke="#bababa" stroke-width="0.8"/><rect x="684.5" y="860.2" width="2.2" height="2.2" fill="none" stroke="#bababa" stroke-width="0.8"/><rect x="812.1" y="860.2" width="2.2" height="2.2" fill="none" stroke="#bababa" stroke-width="0.8"/><rect x="1341.5" y="857.8" width="2.2" height="2.2" fill="none" stroke="#bababa" stroke-width="0.8"/><rect x="869.1" y="861.1" width="2.2" height="2.2" fill="none" stroke="#bababa" stroke-width="0.8"/><rect x="1137.0" y="856.5" width="2.2" height="2.2" fill="none" stroke="#bababa" stroke-width="0.8"/><rect x="641.8" y="856.4" width="2.2" height="2.2" fill="none" stroke="#bababa" stroke-width="0.8"/><rect x="1286.2" y="860.3" width="2.2" height="2.2" fill="none" stroke="#bababa" stroke-width="0.8"/><rect x="657.7" y="860.4" width="2.2" height="2.2" fill="none" stroke="#bababa" stroke-width="0.8"/><rect x="1348.7" y="859.4" width="2.2" height="2.2" fill="none" stroke="#bababa" stroke-width="0.8"/><rect x="826.9" y="858.8" width="2.2" height="2.2" fill="none" stroke="#bababa" stroke-width="0.8"/><rect x="645.1" y="855.6" width="2.2" height="2.2" fill="none" stroke="#bababa" stroke-width="0.8"/><rect x="1340.9" y="859.3" width="2.2" height="2.2" fill="none" stroke="#bababa" stroke-width="0.8"/><rect x="972.8" y="861.0" width="2.2" height="2.2" fill="none" stroke="#bababa" stroke-width="0.8"/><rect x="896.0" y="860.7" width="2.2" height="2.2" fill="none" stroke="#bababa" stroke-width="0.8"/><rect x="1221.0" y="856.8" width="2.2" height="2.2" fill="none" stroke="#bababa" stroke-width="0.8"/><rect x="745.2" y="857.2" width="2.2" height="2.2" fill="none" stroke="#bababa" stroke-width="0.8"/><rect x="735.9" y="859.0" width="2.2" height="2.2" fill="none" stroke="#bababa" stroke-width="0.8"/><rect x="751.5" y="858.0" width="2.2" height="2.2" fill="none" stroke="#bababa" stroke-width="0.8"/><rect x="645.2" y="860.9" width="2.2" height="2.2" fill="none" stroke="#bababa" stroke-width="0.8"/><rect x="829.7" y="858.2" width="2.2" height="2.2" fill="none" stroke="#bababa" stroke-width="0.8"/><rect x="1019.8" y="860.9" width="2.2" height="2.2" fill="none" stroke="#bababa" stroke-width="0.8"/><rect x="885.0" y="860.9" width="2.2" height="2.2" fill="none" stroke="#bababa" stroke-width="0.8"/><rect x="952.2" y="858.7" width="2.2" height="2.2" fill="none" stroke="#bababa" stroke-width="0.8"/><rect x="970.3" y="855.6" width="2.2" height="2.2" fill="none" stroke="#bababa" stroke-width="0.8"/><rect x="901.2" y="856.6" width="2.2" height="2.2" fill="none" stroke="#bababa" stroke-width="0.8"/><rect x="539.9" y="860.2" width="2.2" height="2.2" fill="none" stroke="#bababa" stroke-width="0.8"/><rect x="679.4" y="858.3" width="2.2" height="2.2" fill="none" stroke="#bababa" stroke-width="0.8"/><rect x="1137.4" y="858.8" width="2.2" height="2.2" fill="none" stroke="#bababa" stroke-width="0.8"/><rect x="806.6" y="858.6" width="2.2" height="2.2" fill="none" stroke="#bababa" stroke-width="0.8"/><rect x="996.7" y="860.1" width="2.2" height="2.2" fill="none" stroke="#bababa" stroke-width="0.8"/><rect x="624.5" y="858.8" width="2.2" height="2.2" fill="none" stroke="#bababa" stroke-width="0.8"/><rect x="742.5" y="857.1" width="2.2" height="2.2" fill="none" stroke="#bababa" stroke-width="0.8"/><g stroke="#555" stroke-width="1.1"><line x1="476.5" y1="522.7" x2="476.5" y2="864.2239999999999"/><line x1="469.4" y1="522.90" x2="483.6" y2="522.90"/><line x1="469.4" y1="531.17" x2="483.6" y2="531.17"/><line x1="469.4" y1="779.27" x2="483.6" y2="779.27"/><line x1="469.4" y1="787.54" x2="483.6" y2="787.54"/><line x1="469.4" y1="854.00" x2="483.6" y2="854.00"/><line x1="469.4" y1="863.92" x2="483.6" y2="863.92"/></g><line x1="1356" y1="526.8" x2="1410" y2="526.8" stroke="#999" stroke-width="1.3"/><circle cx="1356.2" cy="526.8" r="1.9" fill="#333"/><line x1="1356" y1="747.8" x2="1410" y2="747.8" stroke="#999" stroke-width="1.3"/><circle cx="1356.2" cy="747.8" r="1.9" fill="#333"/><line x1="1356" y1="783.7" x2="1410" y2="783.7" stroke="#999" stroke-width="1.3"/><circle cx="1356.2" cy="783.7" r="1.9" fill="#333"/><line x1="1356" y1="823.0" x2="1410" y2="823.0" stroke="#999" stroke-width="1.3"/><circle cx="1356.2" cy="823.0" r="1.9" fill="#333"/><line x1="1356" y1="859.1" x2="1410" y2="859.1" stroke="#999" stroke-width="1.3"/><circle cx="1356.2" cy="859.1" r="1.9" fill="#333"/><circle cx="920.4" cy="527" r="14.8" fill="#fff" stroke="#111" stroke-width="1.3"/><circle cx="920.4" cy="655.7" r="14.8" fill="#fff" stroke="#111" stroke-width="1.3"/><circle cx="920.4" cy="783.9" r="14.8" fill="#fff" stroke="#111" stroke-width="1.3"/><circle cx="920.4" cy="821.2" r="14.8" fill="#fff" stroke="#111" stroke-width="1.3"/><circle cx="920.4" cy="859.0" r="14.8" fill="#fff" stroke="#111" stroke-width="1.3"/></svg>
<div class="a" style="left:820.6px;width:200px;text-align:center;top:517.37px;font-size:20px;line-height:20px;color:#000;transform:scaleY(1.07);transform-origin:0 16.93px;">5</div>
<div class="a" style="left:820.6px;width:200px;text-align:center;top:646.07px;font-size:20px;line-height:20px;color:#000;transform:scaleY(1.07);transform-origin:0 16.93px;">4</div>
<div class="a" style="left:820.6px;width:200px;text-align:center;top:774.27px;font-size:20px;line-height:20px;color:#000;transform:scaleY(1.07);transform-origin:0 16.93px;">3</div>
<div class="a" style="left:820.6px;width:200px;text-align:center;top:811.57px;font-size:20px;line-height:20px;color:#000;transform:scaleY(1.07);transform-origin:0 16.93px;">2</div>
<div class="a" style="left:820.6px;width:200px;text-align:center;top:849.37px;font-size:20px;line-height:20px;color:#000;transform:scaleY(1.07);transform-origin:0 16.93px;">1</div>
<div class="a" style="left:920.8px;top:495.52px;font-size:20.3px;line-height:20.3px;color:#888;transform:scaleY(1.0);transform-origin:0 17.18px;">Außen</div>
<div class="a" style="left:925.3px;top:870.99px;font-size:20.8px;line-height:20.8px;color:#888;transform:scaleY(1.0);transform-origin:0 17.61px;">Innen</div>
<div class="a" style="right:534px;text-align:right;top:871.01px;font-size:20.9px;line-height:20.9px;color:#bbb;transform:scaleY(1.0);transform-origin:0 17.69px;">ubakus.de</div>
<div class="a" style="left:484.6px;top:645.77px;font-size:20px;line-height:20px;color:#888;transform:scaleY(1.0);transform-origin:0 16.93px;">300</div>
<div class="a" style="left:484.6px;top:811.07px;font-size:20px;line-height:20px;color:#888;transform:scaleY(1.0);transform-origin:0 16.93px;">80</div>
<div class="a" style="left:439px;top:683.5px;width:40px;text-align:center;font-size:19.4px;line-height:20px;color:#888;transform:rotate(-90deg);">412</div>
<div class="a" style="left:1415.8px;top:514.71px;font-size:20.9px;line-height:20.9px;color:#333;transform:scaleY(1.0);transform-origin:0 17.69px;">Kalkputz (10mm)</div>
<div class="a" style="left:1415.8px;top:735.41px;font-size:20.9px;line-height:20.9px;color:#333;transform:scaleY(1.0);transform-origin:0 17.69px;">Ziegel, 1400 kg/m3, 1952 (MZ, HLz) (300mm)</div>
<div class="a" style="left:1415.8px;top:771.31px;font-size:20.9px;line-height:20.9px;color:#333;transform:scaleY(1.0);transform-origin:0 17.69px;">Kalkputz (10mm)</div>
<div class="a" style="left:1415.8px;top:810.51px;font-size:20.9px;line-height:20.9px;color:#333;transform:scaleY(1.0);transform-origin:0 17.69px;">Hartschaum, PUR, alukaschiert (80mm)</div>
<div class="a" style="left:1415.8px;top:846.61px;font-size:20.9px;line-height:20.9px;color:#333;transform:scaleY(1.0);transform-origin:0 17.69px;">Gipsfaserplatte (12mm)</div>
<div class="a" style="left:906px;top:1003.58px;font-size:19.4px;line-height:19.4px;color:#8b0000;transform:scaleY(1.07);transform-origin:0 16.42px;">Gewerbliche Nutzung nur mit kostenpflichtigem Zugang.</div>
<div class="a" style="left:1396px;top:1003.58px;font-size:19.4px;line-height:19.4px;color:#2233dd;transform:scaleY(1.07);transform-origin:0 16.42px;">Weitere Infos</div>
<div class="a" style="left:0;top:1036px;width:1899px;height:224px;box-sizing:border-box;border-top:1px solid #222;border-bottom:1px solid #000;background:linear-gradient(#565656,#444);"></div>
<div class="a" style="left:400.5px;top:1056.91px;font-size:30.7px;line-height:30.7px;color:#eeeeee;transform:scaleY(1.04);transform-origin:0 25.99px;">U-Wert:</div>
<div class="a" style="left:517.6px;top:1051.58px;font-size:37px;line-height:37px;color:#eeeeee;transform:scaleY(1.04);transform-origin:0 31.32px;">0,255</div>
<div class="a" style="left:620px;top:1067.92px;font-size:17.7px;line-height:17.7px;color:#eeeeee;transform:scaleY(1.04);transform-origin:0 14.98px;">W/(m²K)</div>
<svg class="a" style="left:705px;top:1050px" width="50" height="45" viewBox="705 1050 50 45"><circle cx="725.2" cy="1067.6" r="6.6" fill="#aaaaaa"/><line x1="726" y1="1068.5" x2="740.2" y2="1082.3" stroke="#aaaaaa" stroke-width="5" stroke-linecap="round"/><line x1="720" y1="1062.3" x2="725.6" y2="1067.9" stroke="#525252" stroke-width="4.2" stroke-linecap="round"/><line x1="716" y1="1058.3" x2="721" y2="1063.3" stroke="#525252" stroke-width="4.2"/><circle cx="739.9" cy="1082.3" r="1.1" fill="#525252"/></svg>
<div class="a" style="left:400.7px;top:1102px;width:346.3px;height:1px;background:#3b3b3b;"></div>
<div class="a" style="left:746px;top:1103px;width:1px;height:16px;background:#8a8a8a;"></div>
<div class="a" style="left:400.7px;top:1118px;width:346.3px;height:1px;background:#8a8a8a;"></div>
<div class="a" style="left:400.7px;top:1103px;width:87.69999999999999px;height:15px;background:#a3c642;"></div>
<div class="a" style="left:400.7px;top:1103px;width:87.69999999999999px;height:2px;background:#b8d966;"></div>
<div class="a" style="left:400.7px;top:1119px;width:346.3px;height:1px;background:#3b3b3b;"></div>
<div class="a" style="left:400.7px;top:1120px;width:345.3px;height:3px;background:linear-gradient(90deg,#6e9b4c 0%,#7e9e44 25%,#b9a032 42%,#b05a2e 55%,#a82626 70%,#a82626 100%);"></div>
<div class="a" style="left:746px;top:1120px;width:1px;height:3px;background:#8a8a8a;"></div>
<div class="a" style="left:400.7px;top:1123px;width:346.3px;height:1px;background:#8a8a8a;"></div>
<div class="a" style="left:400px;top:1133.08px;font-size:19.4px;line-height:19.4px;color:#eeeeee;transform:scaleY(1.07);transform-origin:0 16.42px;">GEG 2020 Bestand (k.A.)</div>
<div class="a" style="left:627px;top:1129px;width:25px;height:23px;background:#cfcfcf;border-left:1px solid #888;box-sizing:border-box;"></div>
<div class="a" style="left:632px;top:1135px;width:0;height:0;border-left:7.5px solid transparent;border-right:7.5px solid transparent;border-top:12px solid #555;"></div>
<div class="a" style="left:400px;top:1174.18px;font-size:19.4px;line-height:19.4px;color:#eeeeee;transform:scaleY(1.07);transform-origin:0 16.42px;">Beitrag zum Treibhauseffekt:</div>
<div class="a" style="left:400.7px;top:1197px;width:346.3px;height:1px;background:#3b3b3b;"></div>
<div class="a" style="left:746px;top:1198px;width:1px;height:11px;background:#8a8a8a;"></div>
<div class="a" style="left:400.7px;top:1208px;width:346.3px;height:1px;background:#8a8a8a;"></div>
<div class="a" style="left:400.7px;top:1198px;width:345.3px;height:10px;background:#bb0000;"></div>
<div class="a" style="left:400.7px;top:1198px;width:345.3px;height:2px;background:#d45050;"></div>
<div class="a" style="left:400.7px;top:1209px;width:346.3px;height:1px;background:#3b3b3b;"></div>
<div class="a" style="left:400.7px;top:1210px;width:345.3px;height:3px;background:linear-gradient(90deg,#6e9b4c 0%,#7e9e44 45%,#b9a032 70%,#b05a2e 88%,#a82626 100%);"></div>
<div class="a" style="left:746px;top:1210px;width:1px;height:3px;background:#8a8a8a;"></div>
<div class="a" style="left:400.7px;top:1213px;width:346.3px;height:1px;background:#8a8a8a;"></div>
<div class="a" style="left:400px;top:1225.27px;font-size:17.4px;line-height:17.4px;color:#bdbdbd;transform:scaleY(1.05);transform-origin:0 14.73px;">sehr gut</div>
<div class="a" style="right:1151.4px;text-align:right;top:1225.27px;font-size:17.4px;line-height:17.4px;color:#bdbdbd;transform:scaleY(1.05);transform-origin:0 14.73px;">mangelhaft</div>
<div class="a" style="left:778.5px;top:1056.48px;font-size:19.4px;line-height:19.4px;color:#eeeeee;transform:scaleY(1.07);transform-origin:0 16.42px;">Tauwasser: 0 kg/m²</div>
<div class="a" style="left:778.5px;top:1079px;width:346.5px;height:1px;background:#3b3b3b;"></div>
<div class="a" style="left:1124px;top:1080px;width:1px;height:10px;background:#8a8a8a;"></div>
<div class="a" style="left:778.5px;top:1089px;width:346.5px;height:1px;background:#8a8a8a;"></div>
<div class="a" style="left:778.5px;top:1090px;width:346.5px;height:1px;background:#3b3b3b;"></div>
<div class="a" style="left:778.5px;top:1091px;width:345.5px;height:3px;background:linear-gradient(90deg,#6e9b4c 0%,#7e9e44 50%,#b9a032 75%,#b05a2e 90%,#a82626 100%);"></div>
<div class="a" style="left:1124px;top:1091px;width:1px;height:3px;background:#8a8a8a;"></div>
<div class="a" style="left:778.5px;top:1094px;width:346.5px;height:1px;background:#8a8a8a;"></div>
<div class="a" style="left:779px;top:1080px;width:3px;height:9px;background:#8fd060;"></div>
<div class="a" style="left:778.5px;top:1113.98px;font-size:19.4px;line-height:19.4px;color:#eeeeee;transform:scaleY(1.07);transform-origin:0 16.42px;">Holzfeuchte: +0,0 %</div>
<div class="a" style="left:778.5px;top:1137px;width:346.5px;height:1px;background:#3b3b3b;"></div>
<div class="a" style="left:1124px;top:1138px;width:1px;height:10px;background:#8a8a8a;"></div>
<div class="a" style="left:778.5px;top:1147px;width:346.5px;height:1px;background:#8a8a8a;"></div>
<div class="a" style="left:778.5px;top:1148px;width:346.5px;height:1px;background:#3b3b3b;"></div>
<div class="a" style="left:778.5px;top:1149px;width:345.5px;height:3px;background:linear-gradient(90deg,#6e9b4c 0%,#7e9e44 18%,#b9a032 32%,#b05a2e 45%,#a82626 55%,#a82626 100%);"></div>
<div class="a" style="left:1124px;top:1149px;width:1px;height:3px;background:#8a8a8a;"></div>
<div class="a" style="left:778.5px;top:1152px;width:346.5px;height:1px;background:#8a8a8a;"></div>
<div class="a" style="left:779px;top:1138px;width:3px;height:9px;background:#8fd060;"></div>
<div class="a" style="left:778.5px;top:1171.58px;font-size:19.4px;line-height:19.4px;color:#eeeeee;transform:scaleY(1.07);transform-origin:0 16.42px;">Trocknungsdauer: -</div>
<div class="a" style="left:778.5px;top:1195px;width:346.5px;height:1px;background:#3b3b3b;"></div>
<div class="a" style="left:1124px;top:1196px;width:1px;height:10px;background:#8a8a8a;"></div>
<div class="a" style="left:778.5px;top:1205px;width:346.5px;height:1px;background:#8a8a8a;"></div>
<div class="a" style="left:778.5px;top:1206px;width:346.5px;height:1px;background:#3b3b3b;"></div>
<div class="a" style="left:778.5px;top:1207px;width:345.5px;height:3px;background:linear-gradient(90deg,#6e9b4c 0%,#7e9e44 40%,#b9a032 70%,#b05a2e 85%,#a82626 100%);"></div>
<div class="a" style="left:1124px;top:1207px;width:1px;height:3px;background:#8a8a8a;"></div>
<div class="a" style="left:778.5px;top:1210px;width:346.5px;height:1px;background:#8a8a8a;"></div>
<div class="a" style="left:779px;top:1196px;width:3px;height:9px;background:#8fd060;"></div>
<div class="a" style="left:777.5px;top:1223.27px;font-size:17.4px;line-height:17.4px;color:#bdbdbd;transform:scaleY(1.05);transform-origin:0 14.73px;">sehr gut</div>
<div class="a" style="right:773.5px;text-align:right;top:1223.27px;font-size:17.4px;line-height:17.4px;color:#bdbdbd;transform:scaleY(1.05);transform-origin:0 14.73px;">mangelhaft</div>
<div class="a" style="left:1155.7px;top:1055.78px;font-size:19.4px;line-height:19.4px;color:#eeeeee;transform:scaleY(1.07);transform-origin:0 16.42px;">sd-Wert: 80003 m</div>
<div class="a" style="right:395.5px;text-align:right;top:1055.78px;font-size:19.4px;line-height:19.4px;color:#eeeeee;transform:scaleY(1.07);transform-origin:0 16.42px;">Dicke: 41,2 cm</div>
<div class="a" style="right:395.5px;text-align:right;top:1082.98px;font-size:19.4px;line-height:19.4px;color:#eeeeee;transform:scaleY(1.07);transform-origin:0 16.42px;">Gewicht: 464 kg/m²</div>
<div class="a" style="left:1155.7px;top:1113.18px;font-size:19.4px;line-height:19.4px;color:#eeeeee;transform:scaleY(1.07);transform-origin:0 16.42px;">Oberfläche innen: 18,5°C (77%)</div>
<div class="a" style="left:1156.7px;top:1136px;width:346.29999999999995px;height:1px;background:#3b3b3b;"></div>
<div class="a" style="left:1502px;top:1137px;width:1px;height:10px;background:#8a8a8a;"></div>
<div class="a" style="left:1156.7px;top:1146px;width:346.29999999999995px;height:1px;background:#8a8a8a;"></div>
<div class="a" style="left:1156.7px;top:1137px;width:79.29999999999995px;height:9px;background:#dcc400;"></div>
<div class="a" style="left:1156.7px;top:1137px;width:79.29999999999995px;height:2px;background:#e8d850;"></div>
<div class="a" style="left:1156.7px;top:1147px;width:346.29999999999995px;height:1px;background:#3b3b3b;"></div>
<div class="a" style="left:1156.7px;top:1148px;width:345.29999999999995px;height:3px;background:linear-gradient(90deg,#a82626 0%,#a82626 15%,#b9a032 32%,#7e9e44 50%,#6e9b4c 100%);"></div>
<div class="a" style="left:1502px;top:1148px;width:1px;height:3px;background:#8a8a8a;"></div>
<div class="a" style="left:1156.7px;top:1151px;width:346.29999999999995px;height:1px;background:#8a8a8a;"></div>
<div class="a" style="left:1155.7px;top:1171.88px;font-size:19.4px;line-height:19.4px;color:#eeeeee;transform:scaleY(1.07);transform-origin:0 16.42px;">Trocknungsreserve: 0 g/m²a</div>
<div class="a" style="left:1156.7px;top:1194px;width:346.29999999999995px;height:1px;background:#3b3b3b;"></div>
<div class="a" style="left:1502px;top:1195px;width:1px;height:10px;background:#8a8a8a;"></div>
<div class="a" style="left:1156.7px;top:1204px;width:346.29999999999995px;height:1px;background:#8a8a8a;"></div>
<div class="a" style="left:1155.7px;top:1222.27px;font-size:17.4px;line-height:17.4px;color:#bdbdbd;transform:scaleY(1.05);transform-origin:0 14.73px;">mangelhaft</div>
<div class="a" style="right:395.4000000000001px;text-align:right;top:1222.27px;font-size:17.4px;line-height:17.4px;color:#bdbdbd;transform:scaleY(1.05);transform-origin:0 14.73px;">sehr gut</div>
<div class="a" style="left:1534.4px;top:1055.78px;font-size:19.4px;line-height:19.4px;color:#eeeeee;transform:scaleY(1.07);transform-origin:0 16.42px;">Temp.Ampl.Dämpfung (1/TAV): 43,7</div>
<svg class="a" style="left:1857px;top:1050.8px" width="26" height="26" viewBox="0 0 26 26"><circle cx="13" cy="13" r="11" fill="none" stroke="#9a9a9a" stroke-width="1.8"/><path d="M9.8,10.2 A3.3,3.3 0 1 1 14.5,13 Q13,14 13,15.6" fill="none" stroke="#9a9a9a" stroke-width="1.8"/><rect x="12" y="17.3" width="2" height="2" fill="#9a9a9a"/></svg>
<div class="a" style="left:1534.4px;top:1079px;width:346.5999999999999px;height:1px;background:#3b3b3b;"></div>
<div class="a" style="left:1880px;top:1080px;width:1px;height:10px;background:#8a8a8a;"></div>
<div class="a" style="left:1534.4px;top:1089px;width:346.5999999999999px;height:1px;background:#8a8a8a;"></div>
<div class="a" style="left:1534.4px;top:1080px;width:345.5999999999999px;height:9px;background:#8cc85a;"></div>
<div class="a" style="left:1534.4px;top:1080px;width:345.5999999999999px;height:2px;background:#b2de8a;"></div>
<div class="a" style="left:1534.4px;top:1090px;width:346.5999999999999px;height:1px;background:#3b3b3b;"></div>
<div class="a" style="left:1534.4px;top:1091px;width:345.5999999999999px;height:3px;background:linear-gradient(90deg,#a82626 0%,#b9a032 18%,#7e9e44 45%,#6e9b4c 100%);"></div>
<div class="a" style="left:1880px;top:1091px;width:1px;height:3px;background:#8a8a8a;"></div>
<div class="a" style="left:1534.4px;top:1094px;width:346.5999999999999px;height:1px;background:#8a8a8a;"></div>
<div class="a" style="left:1534.4px;top:1114.18px;font-size:19.4px;line-height:19.4px;color:#eeeeee;transform:scaleY(1.07);transform-origin:0 16.42px;">Phasenverschiebung: 16 h</div>
<svg class="a" style="left:1857px;top:1108.8px" width="26" height="26" viewBox="0 0 26 26"><circle cx="13" cy="13" r="11" fill="none" stroke="#9a9a9a" stroke-width="1.8"/><path d="M9.8,10.2 A3.3,3.3 0 1 1 14.5,13 Q13,14 13,15.6" fill="none" stroke="#9a9a9a" stroke-width="1.8"/><rect x="12" y="17.3" width="2" height="2" fill="#9a9a9a"/></svg>
<div class="a" style="left:1534.4px;top:1137px;width:346.5999999999999px;height:1px;background:#3b3b3b;"></div>
<div class="a" style="left:1880px;top:1138px;width:1px;height:10px;background:#8a8a8a;"></div>
<div class="a" style="left:1534.4px;top:1147px;width:346.5999999999999px;height:1px;background:#8a8a8a;"></div>
<div class="a" style="left:1534.4px;top:1138px;width:313.5999999999999px;height:9px;background:#8cc85a;"></div>
<div class="a" style="left:1534.4px;top:1138px;width:313.5999999999999px;height:2px;background:#b2de8a;"></div>
<div class="a" style="left:1534.4px;top:1148px;width:346.5999999999999px;height:1px;background:#3b3b3b;"></div>
<div class="a" style="left:1534.4px;top:1149px;width:345.5999999999999px;height:3px;background:linear-gradient(90deg,#a82626 0%,#b9a032 20%,#7e9e44 45%,#6e9b4c 100%);"></div>
<div class="a" style="left:1880px;top:1149px;width:1px;height:3px;background:#8a8a8a;"></div>
<div class="a" style="left:1534.4px;top:1152px;width:346.5999999999999px;height:1px;background:#8a8a8a;"></div>
<div class="a" style="left:1534.4px;top:1171.58px;font-size:19.4px;line-height:19.4px;color:#eeeeee;transform:scaleY(1.07);transform-origin:0 16.42px;">Speicherfähigkeit innen: 51 kJ/m²K</div>
<svg class="a" style="left:1857px;top:1167.5px" width="26" height="26" viewBox="0 0 26 26"><circle cx="13" cy="13" r="11" fill="none" stroke="#9a9a9a" stroke-width="1.8"/><path d="M9.8,10.2 A3.3,3.3 0 1 1 14.5,13 Q13,14 13,15.6" fill="none" stroke="#9a9a9a" stroke-width="1.8"/><rect x="12" y="17.3" width="2" height="2" fill="#9a9a9a"/></svg>
<div class="a" style="left:1534.4px;top:1195px;width:346.5999999999999px;height:1px;background:#3b3b3b;"></div>
<div class="a" style="left:1880px;top:1196px;width:1px;height:10px;background:#8a8a8a;"></div>
<div class="a" style="left:1534.4px;top:1205px;width:346.5999999999999px;height:1px;background:#8a8a8a;"></div>
<div class="a" style="left:1534.4px;top:1196px;width:176.19999999999982px;height:9px;background:#8cc85a;"></div>
<div class="a" style="left:1534.4px;top:1196px;width:176.19999999999982px;height:2px;background:#b2de8a;"></div>
<div class="a" style="left:1534.4px;top:1206px;width:346.5999999999999px;height:1px;background:#3b3b3b;"></div>
<div class="a" style="left:1534.4px;top:1207px;width:345.5999999999999px;height:3px;background:linear-gradient(90deg,#a82626 0%,#b9a032 25%,#7e9e44 50%,#6e9b4c 100%);"></div>
<div class="a" style="left:1880px;top:1207px;width:1px;height:3px;background:#8a8a8a;"></div>
<div class="a" style="left:1534.4px;top:1210px;width:346.5999999999999px;height:1px;background:#8a8a8a;"></div>
<div class="a" style="left:1534px;top:1222.97px;font-size:17.4px;line-height:17.4px;color:#bdbdbd;transform:scaleY(1.05);transform-origin:0 14.73px;">mangelhaft</div>
<div class="a" style="right:18px;text-align:right;top:1222.97px;font-size:17.4px;line-height:17.4px;color:#bdbdbd;transform:scaleY(1.05);transform-origin:0 14.73px;">sehr gut</div>
</body></html>
